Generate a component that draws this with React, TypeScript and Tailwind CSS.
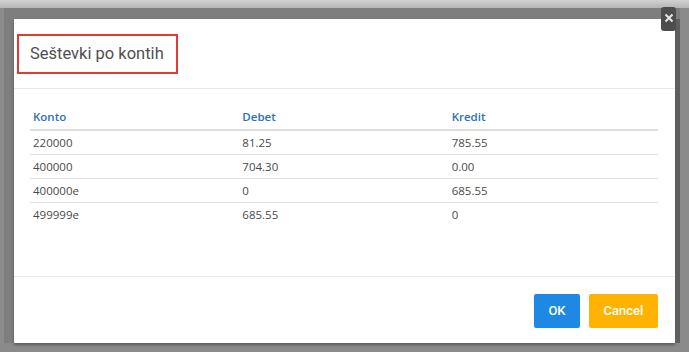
import React from "react";

const rows = [
  ["220000", "81.25", "785.55"],
  ["400000", "704.30", "0.00"],
  ["400000e", "0", "685.55"],
  ["499999e", "685.55", "0"],
];

export default function App() {
  return (
    <div className="relative w-[689px] h-[352px] overflow-hidden bg-[#7e7e7e]">
      <div className="absolute left-0 top-0 w-full h-[8px] bg-gradient-to-b from-[#d2d2d2] to-[#b4b4b4]" />
      <div className="absolute left-0 top-[8px] w-[4px] h-full bg-[#8c8c8c]" />
      <div className="absolute right-0 top-[8px] w-[9px] h-full bg-[#8a8a8a]" />
      <div className="absolute left-0 bottom-0 w-full h-[9px] bg-[#8a8a8a]" />
      <div className="relative pt-[19px] pl-[14px]">
        <div
          className="w-[661px] h-[324px] bg-white flex flex-col shadow-[5px_0_0_#5e5e5e,0_2px_3px_rgba(0,0,0,0.35)]"
          style={{ fontFamily: "'Open Sans', sans-serif" }}
        >
          <div className="h-[70px] border-b border-[#e8e8e8] pt-[15px] pl-[3px]">
            <div className="w-[161px] h-[40px] border-2 border-[#e53935] flex items-center pl-[11px]">
              <span
                className="text-[16.5px] text-[#4f4f4f]"
                style={{ fontFamily: "Roboto, sans-serif" }}
              >
                Seštevki po kontih
              </span>
            </div>
          </div>
          <div className="flex-1 pt-[15px] pl-[16px] pr-[17px]">
            <div className="text-[11.5px]">
              <div className="grid grid-cols-3 h-[27px] items-center border-b-2 border-[#dedede] font-semibold text-[#2f6fb7]">
                <div className="pl-[3px]">Konto</div>
                <div className="pl-[3px]">Debet</div>
                <div className="pl-[3px]">Kredit</div>
              </div>
              {rows.map((r, i) => (
                <div
                  key={i}
                  className={`grid grid-cols-3 h-[24px] items-center text-[#4a4a4a] ${
                    i < rows.length - 1 ? "border-b border-[#e2e2e2]" : ""
                  }`}
                >
                  {r.map((c, j) => (
                    <div key={j} className="pl-[3px]">
                      {c}
                    </div>
                  ))}
                </div>
              ))}
            </div>
          </div>
          <div className="h-[67px] border-t border-[#e8e8e8] flex justify-end items-start pt-[17px] pr-[17px] gap-[9px]">
            <button
              className="w-[46px] h-[34px] rounded-[2px] bg-[#1e88e5] text-white text-[13px] font-medium"
              style={{ fontFamily: "Roboto, sans-serif" }}
            >
              OK
            </button>
            <button
              className="w-[69px] h-[34px] rounded-[2px] bg-[#ffb300] text-white text-[13px] font-medium"
              style={{ fontFamily: "Roboto, sans-serif" }}
            >
              Cancel
            </button>
          </div>
        </div>
      </div>
      <div className="absolute left-[661px] top-[7px] w-[15px] h-[24px] rounded-[3px] bg-[#4d4d4d] flex justify-center pt-[6px]">
        <svg width="10" height="10" viewBox="0 0 10 10">
          <path d="M1.5 1.5L8.5 8.5M8.5 1.5L1.5 8.5" stroke="#e6e6e6" strokeWidth="2" />
        </svg>
      </div>
    </div>
  );
}
